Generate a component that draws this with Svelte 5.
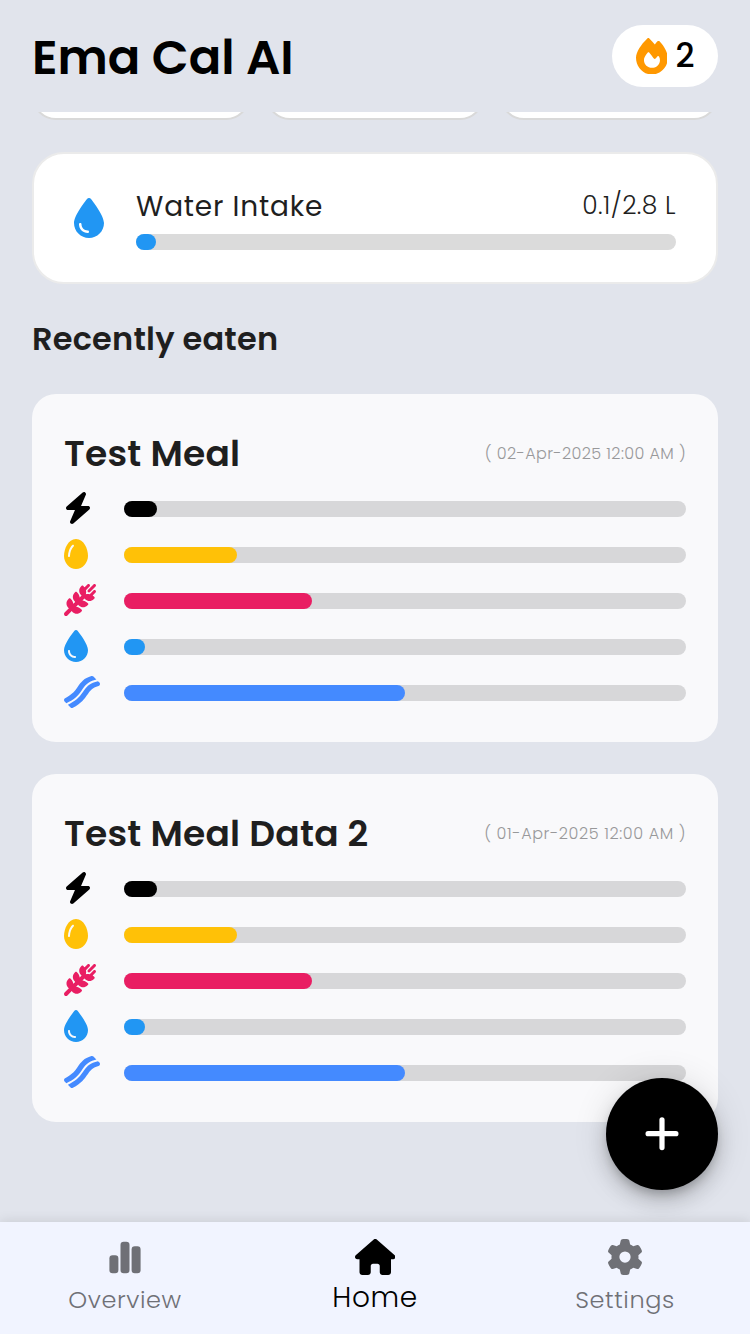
<script>
  const icons = {
    bolt: { w: 448, d: 'M349.4 44.6c5.9-13.7 1.5-29.7-10.6-38.5s-28.6-8-39.9 1.8l-256 224c-10 8.8-13.6 22.9-8.9 35.3S50.7 288 64 288H175.5L98.6 467.4c-5.9 13.7-1.5 29.7 10.6 38.5s28.6 8 39.9-1.8l256-224c10-8.8 13.6-22.9 8.9-35.3s-16.6-20.7-30-20.7H272.5L349.4 44.6z' },
    egg: { w: 384, d: 'M192 496C86 496 0 394.8 0 288C0 176 64 16 192 16s192 160 192 272c0 106.8-86 208-192 208zM154.8 134c6.5-6 7-16.1 1-22.6s-16.1-7-22.6-1c-23.9 21.8-41.1 52.7-52.3 84.2C69.7 226.1 64 259.7 64 288c0 8.8 7.2 16 16 16s16-7.2 16-16c0-24.5 5-54.4 15.1-82.8c10.1-28.5 25-54.1 43.7-71.2z' },
    wheat: { w: 512, d: 'M505 41c9.4-9.4 9.4-24.6 0-33.9s-24.6-9.4-33.9 0L383 95c-9.4 9.4-9.4 24.6 0 33.9s24.6 9.4 33.9 0l88-88zM305.5 27.3c-6.2-6.2-16.4-6.2-22.6 0L271.5 38.6c-37.5 37.5-37.5 98.3 0 135.8l10.4 10.4-30.5 30.5c-3.4-27.3-15.5-53.8-36.5-74.8l-11.3-11.3c-6.2-6.2-16.4-6.2-22.6 0l-11.3 11.3c-37.5 37.5-37.5 98.3 0 135.8l10.4 10.4-30.5 30.5c-3.4-27.3-15.5-53.8-36.5-74.8L101.8 231c-6.2-6.2-16.4-6.2-22.6 0L67.9 242.3c-37.5 37.5-37.5 98.3 0 135.8l10.4 10.4L9.4 457.4c-12.5 12.5-12.5 32.8 0 45.3s32.8 12.5 45.3 0l68.9-68.9 12.2 12.2c37.5 37.5 98.3 37.5 135.8 0l11.3-11.3c6.2-6.2 6.2-16.4 0-22.6l-11.3-11.3c-21.8-21.8-49.6-34.1-78.1-36.9l31.9-31.9 12.2 12.2c37.5 37.5 98.3 37.5 135.8 0l11.3-11.3c6.2-6.2 6.2-16.4 0-22.6l-11.3-11.3c-21.8-21.8-49.6-34.1-78.1-36.9l31.9-31.9 12.2 12.2c37.5 37.5 98.3 37.5 135.8 0L486.5 231c6.2-6.2 6.2-16.4 0-22.6L475.2 197c-5.2-5.2-10.6-9.8-16.4-13.9L505 137c9.4-9.4 9.4-24.6 0-33.9s-24.6-9.4-33.9 0l-59.4 59.4c-20.6-4.4-42-3.7-62.3 2.1c6.1-21.3 6.6-43.8 1.4-65.3L409 41c9.4-9.4 9.4-24.6 0-33.9s-24.6-9.4-33.9 0L329.1 52.9c-3.7-5-7.8-9.8-12.4-14.3L305.5 27.3z' },
    drop: { w: 384, d: 'M192 512C86 512 0 426 0 320C0 228.8 130.2 57.7 166.6 11.7C172.6 4.2 181.5 0 191.1 0h1.8c9.6 0 18.5 4.2 24.5 11.7C253.8 57.7 384 228.8 384 320c0 106-86 192-192 192zM96 336c0-8.8-7.2-16-16-16s-16 7.2-16 16c0 61.9 50.1 112 112 112c8.8 0 16-7.2 16-16s-7.2-16-16-16c-44.2 0-80-35.8-80-80z' },
    bacon: { w: 576, d: 'M439.2 1.2c11.2-3.2 23.2-.1 31.4 8.1L518 56.7l-26.5 7.9c-58 16.6-98.1 39.6-129.6 67.4c-31.2 27.5-53.2 59.1-75.1 90.9l-2.3 3.3C241.6 288.7 195 356.6 72.8 417.7L37.9 435.2 9.4 406.6c-7.3-7.3-10.6-17.6-9-27.8s8.1-18.9 17.3-23.5C136.1 296.2 180.9 231 223.3 169.3l2.3-3.4c21.8-31.8 44.9-64.9 77.7-93.9c33.4-29.5 75.8-53.6 135.9-70.8zM61.8 459l25.4-12.7c129.5-64.7 179.9-138.1 223.8-202l2.2-3.3c22.1-32.1 42.1-60.5 69.9-85.1c27.5-24.3 63.4-45.2 117.3-60.6l.2-.1 43.1-12.9 23 23c8 8 11.2 19.7 8.3 30.7s-11.3 19.6-22.2 22.7c-51.9 14.8-85.6 34.7-111.1 57.2c-26.1 23-45.1 49.9-67.3 82.1l-2.2 3.2C327.8 365.9 275.5 442 142.3 508.6c-12.3 6.2-27.2 3.7-36.9-6L61.8 459z' },
    fire: { w: 448, d: 'M159.3 5.4c7.8-7.3 19.9-7.2 27.7 .1c27.6 25.9 53.5 53.8 77.7 84c11-14.4 23.5-30.1 37-42.9c7.9-7.4 20.1-7.4 28 .1c34.6 33 63.9 76.6 84.5 118c20.3 40.8 33.8 82.5 33.8 111.9C448 404.2 348.2 512 224 512C98.4 512 0 404.1 0 276.5c0-38.4 17.8-85.3 45.4-131.7C73.3 97.7 112.7 48.6 159.3 5.4zM225.7 416c25.3 0 47.7-7 68.8-21c42.1-29.4 53.4-88.2 28.1-134.4c-4.5-9-16-9.6-22.5-2l-25.2 29.3c-6.6 7.6-18.5 7.4-24.7-.5c-16.5-21-46-58.5-62.8-79.8c-6.3-8-18.3-8.1-24.7-.1c-33.8 42.5-50.8 69.3-50.8 99.4C112 375.4 162.6 416 225.7 416z' },
    home: { w: 576, d: 'M575.8 255.5c0 18-15 32.1-32 32.1h-32l.7 160.2c0 2.7-.2 5.4-.5 8.1V472c0 22.1-17.9 40-40 40H456c-1.1 0-2.2 0-3.3-.1c-1.4 .1-2.8 .1-4.2 .1H416 392c-22.1 0-40-17.9-40-40V448 384c0-17.7-14.3-32-32-32H256c-17.7 0-32 14.3-32 32v64 24c0 22.1-17.9 40-40 40H160 128.1c-1.5 0-3-.1-4.5-.2c-1.2 .1-2.4 .2-3.6 .2H104c-22.1 0-40-17.9-40-40V360c0-.9 0-1.9 .1-2.8V287.6H32c-18 0-32-14-32-32.1c0-9 3-17 10-24L266.4 8c7-7 15-8 22-8s15 2 21 7L564.8 231.5c8 7 12 15 11 24z' },
    gear: { w: 512, d: 'M495.9 166.6c3.2 8.7 .5 18.4-6.4 24.6l-43.3 39.4c1.1 8.3 1.7 16.8 1.7 25.4s-.6 17.1-1.7 25.4l43.3 39.4c6.9 6.2 9.6 15.9 6.4 24.6c-4.4 11.9-9.7 23.3-15.8 34.3l-4.7 8.1c-6.6 11-14 21.4-22.1 31.2c-5.9 7.2-15.7 9.6-24.5 6.8l-55.7-17.7c-13.4 10.3-28.2 18.9-44 25.4l-12.5 57.1c-2 9.1-9 16.3-18.2 17.8c-13.8 2.3-28 3.5-42.5 3.5s-28.7-1.2-42.5-3.5c-9.2-1.5-16.2-8.7-18.2-17.8l-12.5-57.1c-15.8-6.5-30.6-15.1-44-25.4L83.1 425.9c-8.8 2.8-18.6 .3-24.5-6.8c-8.1-9.8-15.5-20.2-22.1-31.2l-4.7-8.1c-6.1-11-11.4-22.4-15.8-34.3c-3.2-8.7-.5-18.4 6.4-24.6l43.3-39.4C64.6 273.1 64 264.6 64 256s.6-17.1 1.7-25.4L22.4 191.2c-6.9-6.2-9.6-15.9-6.4-24.6c4.4-11.9 9.7-23.3 15.8-34.3l4.7-8.1c6.6-11 14-21.4 22.1-31.2c5.9-7.2 15.7-9.6 24.5-6.8l55.7 17.7c13.4-10.3 28.2-18.9 44-25.4l12.5-57.1c2-9.1 9-16.3 18.2-17.8C227.3 1.2 241.5 0 256 0s28.7 1.2 42.5 3.5c9.2 1.5 16.2 8.7 18.2 17.8l12.5 57.1c15.8 6.5 30.6 15.1 44 25.4l55.7-17.7c8.8-2.8 18.6-.3 24.5 6.8c8.1 9.8 15.5 20.2 22.1 31.2l4.7 8.1c6.1 11 11.4 22.4 15.8 34.3zM256 336a80 80 0 1 0 0-160 80 80 0 1 0 0 160z' }
  };

  const nutrients = [
    { icon: 'bolt', color: '#000000', value: 5.9 },
    { icon: 'egg', color: '#ffc107', value: 20.05 },
    { icon: 'wheat', color: '#e91e63', value: 33.4 },
    { icon: 'drop', color: '#2196f3', value: 3.65 },
    { icon: 'bacon', color: '#448aff', value: 50 }
  ];

  const meals = [
    { name: 'Test Meal', date: '( 02-Apr-2025 12:00 AM )', spacing: 0.38 },
    { name: 'Test Meal Data 2', date: '( 01-Apr-2025 12:00 AM )', spacing: 0.59 }
  ];
</script>

{#snippet icon(name, height, color)}
  <svg width={(icons[name].w / 512) * height} {height} viewBox="0 0 {icons[name].w} 512" fill={color}>
    <path d={icons[name].d} />
  </svg>
{/snippet}

<div class="screen">
  <header>
    <h1>Ema Cal AI</h1>
    <div class="streak">
      {@render icon('fire', 36.5, '#ff9800')}
      <span>2</span>
    </div>
  </header>

  <main>
    <div class="tiles"><div></div><div></div><div></div></div>

    <section class="water">
      {@render icon('drop', 40, '#2196f3')}
      <div class="water-body">
        <div class="water-row">
          <span class="water-name">Water Intake</span>
          <span class="water-value">0.1/2.8 L</span>
        </div>
        <div class="track pale"><div class="fill" style="width: 3.65%; background: #2196f3"></div></div>
      </div>
    </section>

    <h2>Recently eaten</h2>

    <div class="meals">
      {#each meals as meal}
        <article>
          <div class="meal-head">
            <h3>{meal.name}</h3>
            <time style="letter-spacing: {meal.spacing}px">{meal.date}</time>
          </div>
          <div class="rows">
            {#each nutrients as n}
              <div class="row">
                <div class="glyph">{@render icon(n.icon, 32, n.color)}</div>
                <div class="track"><div class="fill" style="width: {n.value}%; background: {n.color}"></div></div>
              </div>
            {/each}
          </div>
        </article>
      {/each}
    </div>
  </main>

  <nav>
    <div class="tab">
      <div class="tab-icon">
        <svg width="36" height="36" viewBox="0 0 36 36" fill="#6f7076">
          <rect x="2.4" y="16.3" width="9" height="17.9" rx="3.2" />
          <rect x="13.5" y="2.8" width="9" height="31.4" rx="3.2" />
          <rect x="24.6" y="7.2" width="9" height="27" rx="3.2" />
        </svg>
      </div>
      <span>Overview</span>
    </div>
    <div class="tab active">
      <div class="tab-icon">{@render icon('home', 36, '#000')}</div>
      <span class="home">Home</span>
    </div>
    <div class="tab">
      <div class="tab-icon">{@render icon('gear', 36, '#6f7076')}</div>
      <span>Settings</span>
    </div>
  </nav>

  <button class="fab" aria-label="Add">
    <svg width="34" height="34" viewBox="0 0 34 34" stroke="#fff" stroke-width="5.2" stroke-linecap="round">
      <path d="M17 2.8v27.8M3.1 16.7h27.8" />
    </svg>
  </button>
</div>

<style>
  :global(body) {
    margin: 0;
    background: #e1e4ec;
  }
  .screen {
    position: relative;
    display: flex;
    flex-direction: column;
    width: 750px;
    height: 1334px;
    overflow: hidden;
    background: #e1e4ec;
    color: #1f1f1f;
    font-family: Poppins, Inter, sans-serif;
    font-variant-numeric: tabular-nums;
    white-space: nowrap;
  }
  svg {
    display: block;
    flex: none;
  }
  h1, h2, h3 {
    margin: 0;
    font-weight: 600;
  }
  header {
    display: flex;
    align-items: center;
    justify-content: space-between;
    box-sizing: border-box;
    height: 112px;
    padding: 0 32px;
    flex: none;
  }
  h1 {
    color: #000;
    font-size: 48px;
    line-height: 60px;
    padding-top: 4px;
  }
  .streak {
    display: flex;
    align-items: center;
    box-sizing: border-box;
    width: 106px;
    height: 62px;
    padding-left: 23.5px;
    gap: 8px;
    border-radius: 31px;
    background: #fff;
    color: #000;
    font-size: 33px;
    font-weight: 500;
    line-height: 40px;
  }
  main {
    flex: 1;
    min-height: 0;
    padding: 0 32px;
  }
  .tiles {
    display: flex;
    align-items: flex-end;
    gap: 16px;
    height: 8px;
    overflow: hidden;
  }
  .tiles div {
    flex: 1;
    box-sizing: border-box;
    height: 60px;
    border: 2px solid #d9d9d9;
    border-radius: 24px;
    background: #fff;
  }
  .water {
    display: flex;
    align-items: center;
    box-sizing: border-box;
    height: 132px;
    margin-top: 32px;
    padding: 0 40px;
    gap: 32px;
    border: 2px solid #ebebeb;
    border-radius: 32px;
    background: #fff;
  }
  .water-body {
    flex: 1;
  }
  .water-row {
    display: flex;
    align-items: center;
    justify-content: space-between;
    height: 42px;
    margin-bottom: 6px;
  }
  .water-name {
    font-size: 28px;
    letter-spacing: 0.8px;
    line-height: 42px;
  }
  .water-value {
    font-size: 25px;
    font-weight: 300;
    letter-spacing: 0.4px;
    line-height: 42px;
    padding-bottom: 2px;
  }
  .track {
    flex: 1;
    height: 16px;
    border-radius: 8px;
    background: #d7d7d9;
  }
  .pale {
    background: #dbdbdb;
  }
  .fill {
    height: 16px;
    border-radius: 8px;
  }
  h2 {
    margin-top: 30px;
    font-size: 32px;
    letter-spacing: 0.2px;
    line-height: 50px;
    height: 80px;
  }
  .meals {
    display: flex;
    flex-direction: column;
    gap: 32px;
  }
  article {
    box-sizing: border-box;
    height: 348px;
    padding: 32px;
    border-radius: 24px;
    background: #f9f9fb;
  }
  .meal-head {
    display: flex;
    align-items: center;
    justify-content: space-between;
    height: 56px;
    margin-bottom: 10px;
  }
  h3 {
    font-size: 36px;
    letter-spacing: 0.25px;
    line-height: 56px;
  }
  time {
    color: #98989a;
    font-size: 16px;
    font-weight: 300;
    line-height: 56px;
  }
  .rows {
    display: flex;
    flex-direction: column;
    gap: 14px;
  }
  .row {
    display: flex;
    align-items: center;
    height: 32px;
  }
  .row .track {
    margin-top: 2px;
  }
  .glyph {
    width: 60px;
  }
  nav {
    display: flex;
    box-sizing: border-box;
    flex: none;
    height: 112px;
    padding-top: 17px;
    background: #f1f4ff;
    box-shadow: 0 0 12px rgba(0, 0, 0, 0.12);
    color: #6f7076;
  }
  .tab {
    display: flex;
    flex: 1;
    flex-direction: column;
    align-items: center;
    gap: 6px;
  }
  .tab-icon {
    height: 37px;
  }
  .tab span {
    font-size: 24px;
    font-weight: 300;
    line-height: 36px;
    letter-spacing: 0.6px;
  }
  .active {
    gap: 4px;
    color: #000;
  }
  .tab span.home {
    font-size: 28px;
  }
  .fab {
    position: absolute;
    right: 32px;
    bottom: 144px;
    display: grid;
    place-items: center;
    width: 112px;
    height: 112px;
    padding: 0;
    border: 0;
    border-radius: 50%;
    background: #000;
    box-shadow: 0 6px 10px -2px rgba(0, 0, 0, 0.2), 0 12px 20px rgba(0, 0, 0, 0.14), 0 2px 36px rgba(0, 0, 0, 0.12);
    clip-path: inset(-60px -60px -32px -60px);
  }
</style>
